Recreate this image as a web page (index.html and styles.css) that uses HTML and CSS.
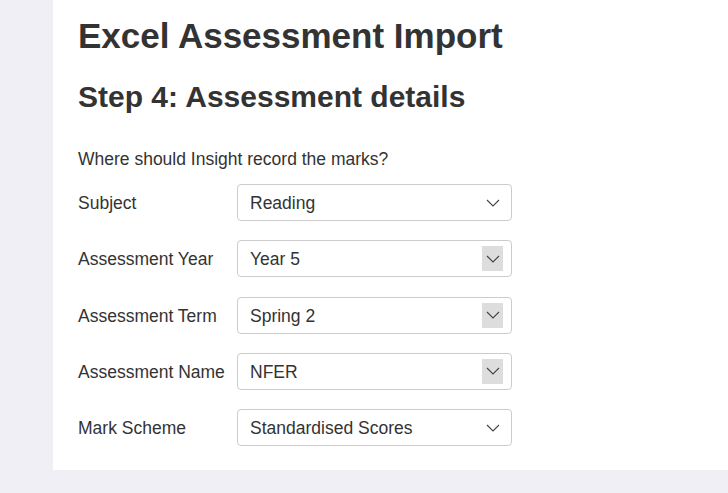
FILE: index.html
```html
<!DOCTYPE html>
<html lang="en">
<head>
    <meta charset="UTF-8">
    <meta name="viewport" content="width=device-width, initial-scale=1.0">
    <title>Excel Assessment Import</title>
    <link rel="stylesheet" href="styles.css">
</head>
<body>
    <div class="panel">
        <h1>Excel Assessment Import</h1>
        <h2>Step 4: Assessment details</h2>
        <p class="intro">Where should Insight record the marks?</p>

        <div class="form-grid">
            <label>Subject</label>
            <div class="select">
                <span>Reading</span>
                <span class="arrow"><svg width="14" height="8" viewBox="0 0 14 8"><path d="M1 1l6 6 6-6" fill="none" stroke="#444" stroke-width="1.1"/></svg></span>
            </div>

            <label>Assessment Year</label>
            <div class="select">
                <span>Year 5</span>
                <span class="arrow boxed"><svg width="14" height="8" viewBox="0 0 14 8"><path d="M1 1l6 6 6-6" fill="none" stroke="#444" stroke-width="1.1"/></svg></span>
            </div>

            <label>Assessment Term</label>
            <div class="select">
                <span>Spring 2</span>
                <span class="arrow boxed"><svg width="14" height="8" viewBox="0 0 14 8"><path d="M1 1l6 6 6-6" fill="none" stroke="#444" stroke-width="1.1"/></svg></span>
            </div>

            <label>Assessment Name</label>
            <div class="select">
                <span>NFER</span>
                <span class="arrow boxed"><svg width="14" height="8" viewBox="0 0 14 8"><path d="M1 1l6 6 6-6" fill="none" stroke="#444" stroke-width="1.1"/></svg></span>
            </div>

            <label>Mark Scheme</label>
            <div class="select">
                <span>Standardised Scores</span>
                <span class="arrow"><svg width="14" height="8" viewBox="0 0 14 8"><path d="M1 1l6 6 6-6" fill="none" stroke="#444" stroke-width="1.1"/></svg></span>
            </div>
        </div>
    </div>
</body>
</html>
```

FILE: styles.css
```css
body { margin: 0; padding: 0; font-family: "Liberation Sans", Arial, sans-serif; color: #333; background-color: #efeff5; }
.panel { margin-left: 53px; height: 470px; box-sizing: border-box; padding: 15px 25px 0; background: #fff; }
h1 { margin: 0; font-size: 35px; line-height: 42px; font-weight: bold; color: #333; }
h2 { margin: 23px 0 0; font-size: 30px; line-height: 34px; font-weight: bold; color: #333; }
.intro { margin: 34px 0 0; font-size: 17.5px; line-height: 22px; }
.form-grid { margin-top: 14px; display: grid; grid-template-columns: 159px 275px; row-gap: 19.25px; align-items: center; }
.form-grid label { font-size: 17.5px; padding-top: 2px; }
.select { height: 37px; box-sizing: border-box; border: 1px solid #ccc; border-radius: 4px; display: flex; align-items: center; justify-content: space-between; padding: 0 8px 0 12px; font-size: 17.5px; color: #333; }
.select span:first-child { padding-top: 2px; }
.arrow { width: 21px; height: 25px; display: flex; align-items: center; justify-content: center; }
.arrow.boxed { background: #ddd; }
```
